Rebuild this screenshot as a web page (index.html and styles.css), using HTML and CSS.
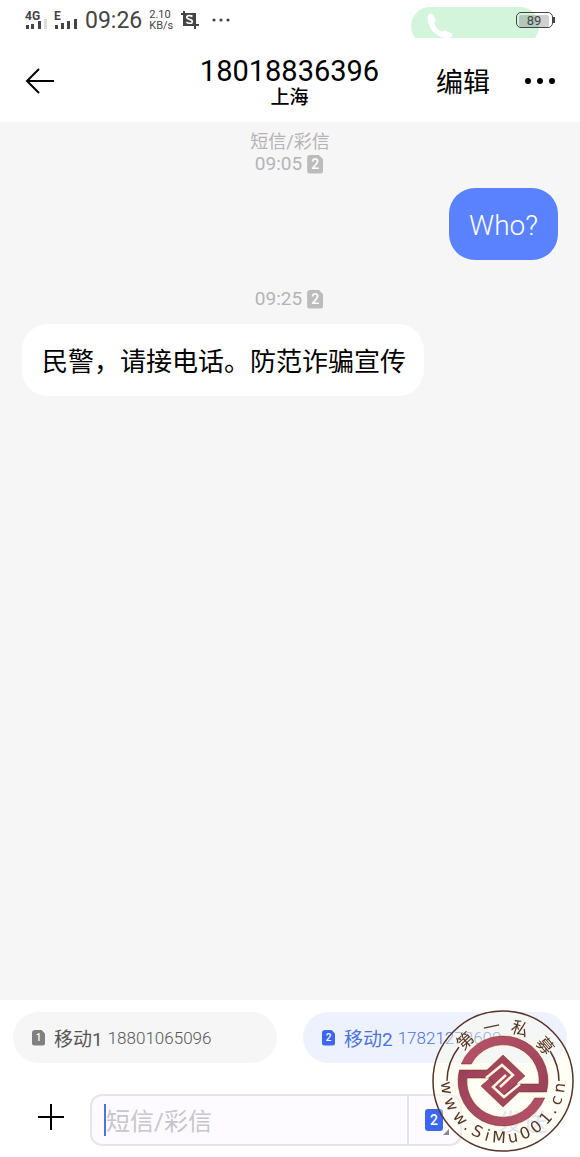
FILE: index.html
```html
<!DOCTYPE html>
<html lang="zh-CN">
    <head>
        <meta charset="UTF-8">
        <meta name="viewport" content="width=device-width, initial-scale=1">
        <title>18018836396</title>
        <link rel="stylesheet" href="styles.css">
    </head>
    <body>
    <div class="status">
        <svg class="signal" width="22" height="26" viewBox="0 -3 22 26">
            <text x="0" y="10">4G</text>
            <rect x="1" y="15" width="3" height="4"/>
            <rect x="6" y="14" width="3" height="5"/>
            <rect x="13" y="11" width="3" height="8"/>
            <rect class="off" x="19" y="9" width="3" height="10"/>
        </svg>
        <svg class="signal" width="24" height="26" viewBox="0 -3 24 26">
            <text x="0" y="10">E</text>
            <rect x="1" y="15" width="3" height="4"/>
            <rect x="7" y="13" width="3" height="6"/>
            <rect x="13" y="11" width="3" height="8"/>
            <rect x="20" y="9" width="3" height="10"/>
        </svg>
        <span class="clock">09:26</span>
        <span class="speed">2.10<br>KB/s</span>
        <svg class="shot" width="18" height="18" viewBox="0 0 18 18">
            <path d="M3 0v14h15M0 3h14v15" fill="none" stroke="#444" stroke-width="2"/>
            <rect x="3" y="3" width="11" height="11" fill="#444"/>
            <path d="M11.5 5.5C10 4.300 5.800 4.200 5.800 6.500c0 2.200 5.600 1.600 5.600 4 0 2.300-4.400 2.200-6 .6" fill="none" stroke="#fff" stroke-width="1.700"/>
        </svg>
        <svg width="18" height="4" viewBox="0 0 18 4" fill="#444">
            <circle cx="2" cy="2" r="1.600"/><circle cx="9" cy="2" r="1.600"/><circle cx="16" cy="2" r="1.600"/>
        </svg>
        <div class="call">
            <svg width="26" height="26" viewBox="0 0 26 26">
                <path d="M1 2C3 0 5 0 6 2l2 4c1 2 0 3-1 4 2 4 4 7 8 9 1-1 2-2 4-1l5 2c2 1 2 3 0 4C14 29-2 16 1 2z" fill="#fff"/>
            </svg>
        </div>
        <div class="battery"><span>89</span></div>
    </div>
    <header class="header">
        <button class="icon-btn back" aria-label="返回">
            <svg width="30" height="28" viewBox="0 0 30 28" fill="none" stroke="#000" stroke-width="2">
                <path d="M15 2L3 14l12 12M3 14h27"/>
            </svg>
        </button>
        <div class="title">
            <h1>18018836396</h1>
            <p>上海</p>
        </div>
        <div class="actions">
            <button class="edit">编辑</button>
            <button class="icon-btn" aria-label="更多">
                <svg width="30" height="8" viewBox="0 0 30 8">
                    <circle cx="3" cy="4" r="3"/><circle cx="15" cy="4" r="3"/><circle cx="27" cy="4" r="3"/>
                </svg>
            </button>
        </div>
    </header>
    <main class="chat">
        <div class="stamp">
            <p>短信/彩信</p>
            <p class="time">09:05 <span class="sim">2</span></p>
        </div>
        <div class="bubble sent">Who?</div>
        <div class="stamp second">
            <p class="time">09:25 <span class="sim">2</span></p>
        </div>
        <div class="bubble received">民警，请接电话。防范诈骗宣传</div>
    </main>
    <footer class="footer">
        <div class="cards">
            <button class="card"><span class="sim small">1</span><span class="name">移动1</span><span class="num">18801065096</span></button>
            <button class="card active"><span class="sim small">2</span><span class="name">移动2</span><span class="num">17821273609</span></button>
        </div>
        <form class="composer">
            <button type="button" class="icon-btn add" aria-label="添加">
                <svg width="28" height="28" viewBox="0 0 28 28" fill="none" stroke="#000" stroke-width="2">
                    <path d="M14 1v26M1 14h26"/>
                </svg>
            </button>
            <div class="field">
                <span class="caret"></span>
                <input type="text" placeholder="短信/彩信" aria-label="短信/彩信">
                <button type="button" class="switch" aria-label="切换号码">
                    <span class="sim big">2</span>
                    <svg width="6" height="6" viewBox="0 0 6 6"><path d="M6 0v6H0z" fill="#888"/></svg>
                </button>
            </div>
            <button type="submit" class="send">发送</button>
        </form>
        <svg class="seal" width="142" height="142" viewBox="-71 -71 142 142">
            <defs>
                <linearGradient id="wine" x1="0" y1="0" x2="1" y2="1">
                    <stop offset="0" stop-color="#b9536b"/>
                    <stop offset="1" stop-color="#963f55"/>
                </linearGradient>
                <g id="half">
                    <path d="M-41.700-17A45 45 0 0 1 43.600 11H16L0 26-22 5 0-14 14 3H36A36 36 0 0 0-31.700-17z"/>
                </g>
            </defs>
            <circle class="paper" r="70"/>
            <circle class="line" r="70"/>
            <path class="line" d="M-56 0A56 56 0 0 1-44-34M47-30A56 56 0 0 1 56 0"/>
            <g class="mark">
                <use href="#half"/>
                <use href="#half" transform="rotate(180)"/>
            </g>
            <g class="key">
                <path d="M-17-3L-1-16 10-6-3 6"/>
                <path d="M17 3L1 16-10 6 3-6"/>
            </g>
            <g class="cn">
                <text y="-49" transform="rotate(-43)">第</text>
                <text y="-49" transform="rotate(-12)">一</text>
                <text y="-49" transform="rotate(18)">私</text>
                <text y="-49" transform="rotate(50)">募</text>
            </g>
            <g class="url">
                <text y="62" transform="rotate(83)">w</text>
                <text y="62" transform="rotate(66)">w</text>
                <text y="62" transform="rotate(49)">w</text>
                <text y="62" transform="rotate(38)">.</text>
                <text y="62" transform="rotate(27)">S</text>
                <text y="62" transform="rotate(16)">i</text>
                <text y="62" transform="rotate(4)">M</text>
                <text y="62" transform="rotate(-10)">u</text>
                <text y="62" transform="rotate(-23)">0</text>
                <text y="62" transform="rotate(-36)">0</text>
                <text y="62" transform="rotate(-49)">1</text>
                <text y="62" transform="rotate(-59)">.</text>
                <text y="62" transform="rotate(-70)">c</text>
                <text y="62" transform="rotate(-83)">n</text>
            </g>
        </svg>
    </footer>
    </body>
</html>
```
FILE: styles.css
```css
*{
    margin:0;
    padding:0;
    box-sizing:border-box;
}
body{
    min-height:100vh;
    display:flex;
    flex-direction:column;
    background:#fff;
    color:#000;
    font-family:Roboto,"Noto Sans CJK SC",sans-serif;
}
button,input{
    border:0;
    background:none;
    font-family:inherit;
    color:inherit;
}
svg{
    display:block;
}
.status{
    position:relative;
    height:39px;
    padding:0 27px 0 25px;
    display:flex;
    align-items:center;
    gap:7px;
    color:#444;
    overflow:hidden;
}
.signal{
    fill:#444;
    font-size:12px;
    font-weight:700;
    overflow:visible;
}
.signal .off{
    fill:#ddd;
}
.clock{
    padding-top:3px;
    font-size:23px;
    line-height:24px;
}
.speed{
    font-size:11px;
    line-height:11px;
}
.shot{
    margin:0 6px 0 1px;
}
.call{
    position:absolute;
    right:41px;
    top:7px;
    width:128px;
    height:38px;
    padding:6px 16px;
    border-radius:19px;
    background:#d2f5dc;
    clip-path:inset(0 0 7px 0);
}
.battery{
    position:relative;
    margin-left:auto;
    width:37px;
    height:16px;
    padding:2px;
    border:1px solid #444;
    border-radius:5px;
    font-size:13px;
    line-height:12px;
    text-align:center;
}
.battery span{
    display:block;
    width:30px;
    background:rgba(120,120,120,.35);
    border-radius:2px;
}
.battery:after{
    content:"";
    position:absolute;
    right:-3px;
    top:4px;
    width:2px;
    height:6px;
    background:#444;
}
.header{
    height:83px;
    padding:0 25px 0 24px;
    display:grid;
    grid-template-columns:1fr auto 1fr;
    align-items:center;
}
.icon-btn{
    display:flex;
    align-items:center;
}
.title{
    padding-top:4px;
    text-align:center;
}
.title h1{
    font-size:29px;
    line-height:30px;
    font-weight:400;
}
.title p{
    font-size:19px;
    line-height:23px;
    font-weight:500;
}
.actions{
    display:flex;
    justify-content:flex-end;
    align-items:center;
    gap:35px;
}
.edit{
    padding-top:4px;
    font-size:27px;
    line-height:36px;
}
.chat{
    flex:1;
    padding:9px 22px;
    display:flex;
    flex-direction:column;
    background:#f6f6f6;
}
.stamp{
    text-align:center;
    font-size:18px;
    line-height:22px;
    color:#b4b4b4;
}
.time{
    display:flex;
    justify-content:center;
    align-items:center;
    gap:5px;
    padding-right:2px;
    font-size:19px;
}
.sim{
    width:16px;
    height:19px;
    border-radius:3px;
    background:#bcbcbc;
    clip-path:polygon(0 0,70% 0,100% 25%,100% 100%,0 100%);
    color:#fff;
    font-size:14px;
    line-height:19px;
    font-weight:500;
    text-align:center;
}
.bubble{
    padding:20px 18px 16px 20px;
    border-radius:26px;
    font-size:26px;
    line-height:36px;
}
.sent{
    align-self:flex-end;
    margin-top:13px;
    padding:20px 20px 16px;
    background:#5a82ff;
    color:#fff;
    font-size:28px;
    font-weight:300;
}
.second{
    margin:28px 0 14px;
}
.received{
    align-self:flex-start;
    background:#fff;
}
.footer{
    position:relative;
    padding:12px 13px 11px;
    background:#fff;
}
.cards{
    display:grid;
    grid-template-columns:1fr 1fr;
    gap:26px;
}
.card{
    height:51px;
    padding-left:19px;
    display:flex;
    align-items:center;
    border-radius:26px;
    background:#f6f6f6;
    color:#555;
}
.name{
    margin:0 5px 0 9px;
    font-size:19px;
}
.num{
    font-size:17px;
    font-weight:300;
}
.small{
    width:13px;
    height:16px;
    font-size:10px;
    line-height:16px;
    background:#808080;
}
.active{
    background:#eef2fe;
    color:#4d74d8;
}
.active .small,.big{
    background:#3d66ee;
}
.composer{
    margin-top:31px;
    padding-left:24px;
    display:flex;
    align-items:center;
}
.add{
    padding-bottom:6px;
}
.field{
    flex:1;
    min-width:0;
    height:52px;
    margin:0 37px 0 25px;
    display:flex;
    align-items:center;
    border:2px solid #e6e5e8;
    border-radius:12px;
    background:#fdfbff;
}
.caret{
    width:2px;
    height:32px;
    margin-left:12px;
    background:#4d74d8;
}
.field input{
    flex:1;
    min-width:0;
    height:48px;
    padding-top:4px;
    font-size:24px;
    outline:0;
}
.field input::placeholder{
    color:#c8c6ca;
}
.switch{
    width:53px;
    height:48px;
    padding-left:16px;
    display:flex;
    align-items:center;
    border-left:2px solid #e6e5e8;
}
.switch svg{
    align-self:flex-end;
    margin-bottom:9px;
}
.big{
    width:18px;
    height:22px;
    line-height:22px;
    clip-path:none;
}
.send{
    margin-right:20px;
    font-size:24px;
    white-space:nowrap;
    color:#c3cff8;
}
.seal{
    position:absolute;
    right:6px;
    bottom:5px;
    pointer-events:none;
}
.paper{
    fill:rgba(255,254,238,.4);
}
.line{
    fill:none;
    stroke:#56352a;
    stroke-width:1.5;
}
.mark{
    fill:url(#wine);
    stroke:#6d2b3b;
    stroke-width:.5;
    filter:drop-shadow(0 0 2px #fff3c4);
}
.key{
    fill:none;
    stroke:#fff6dc;
    stroke-width:2.5;
}
.cn,.url{
    fill:#56352a;
    text-anchor:middle;
    filter:drop-shadow(0 0 2px #fffbe0);
}
.cn{
    font-family:"Noto Sans CJK SC",sans-serif;
    font-size:17px;
}
.url{
    font-family:"DejaVu Sans",sans-serif;
    font-size:16px;
}
```
